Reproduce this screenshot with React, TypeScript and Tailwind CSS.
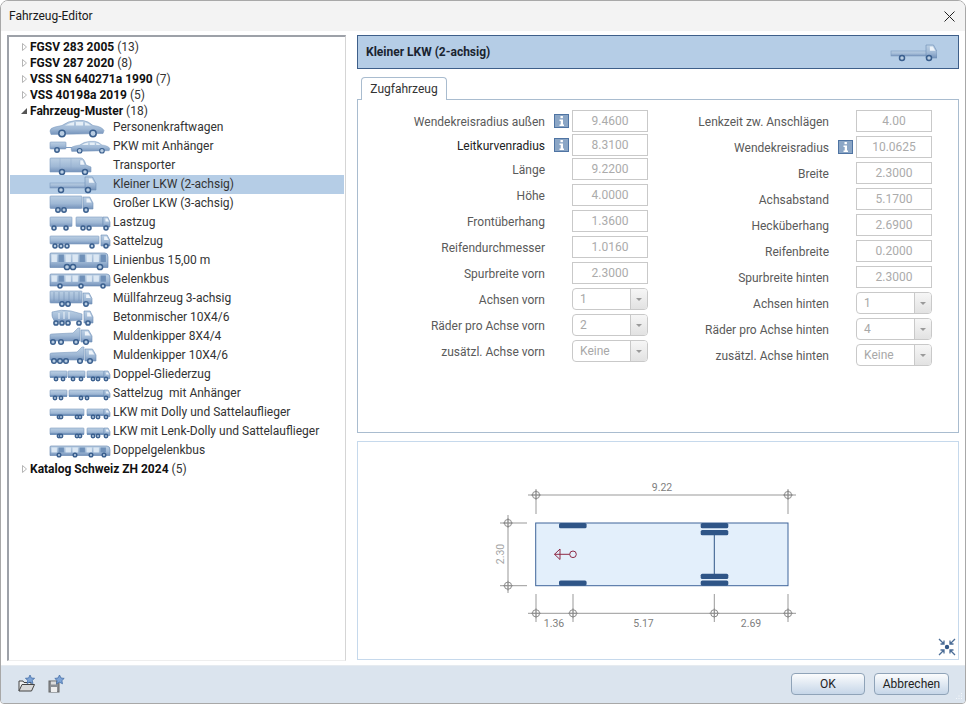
import React from "react";

const Wheel = ({ x, y, r = 2.5 }: { x: number; y: number; r?: number }) => (
  <circle cx={x} cy={y} r={r} fill="#b9cde2" stroke="#3a5f8e" strokeWidth={1.5} />
);
const Box = ({ x, y, w, h }: { x: number; y: number; w: number; h: number }) => (
  <rect x={x} y={y} width={w} height={h} rx={0.8} fill="url(#vg)" stroke="#7d9bc0" strokeWidth={0.6} />
);
const Cab = ({ x, y, w, h }: { x: number; y: number; w: number; h: number }) => (
  <g>
    <path d={`M${x} ${y + h}V${y}H${x + w * 0.68}L${x + w} ${y + h * 0.5}V${y + h}Z`} fill="url(#vg)" stroke="#6d8db5" strokeWidth={0.6} />
    <path d={`M${x + w * 0.35} ${y + 1.5}H${x + w * 0.62}L${x + w * 0.85} ${y + h * 0.45}H${x + w * 0.35}Z`} fill="#eef4fa" />
  </g>
);
const Car = ({ x, y, s = 1 }: { x: number; y: number; s?: number }) => (
  <g transform={`translate(${x} ${y}) scale(${s})`}>
    <path d="M0 11Q0 8 5 7L12 5.5Q18 1 26 .5H33Q38 1 43 5.5Q52 6.5 54 10.5L53 13.5L1 14.5Z" fill="url(#vg)" stroke="#7c9abf" strokeWidth={0.6} />
    <path d="M15 5.5Q20 2.5 24 2V5.5ZM26 2H33V5.5H26ZM35 2.3Q38 3 41 5.5H35Z" fill="#e6eff7" />
    <Wheel x={12} y={13.5} r={3.2} />
    <Wheel x={43} y={13.5} r={3.2} />
  </g>
);
const Bus = ({ x, y, w, h }: { x: number; y: number; w: number; h: number }) => {
  const n = Math.floor(w / 7);
  return (
    <g>
      <path d={`M${x} ${y + 1}Q${x} ${y} ${x + 1} ${y}H${x + w - 3}Q${x + w} ${y} ${x + w} ${y + 4}V${y + h}H${x}Z`} fill="url(#vg)" stroke="#5f82ad" strokeWidth={0.6} />
      {Array.from({ length: n }).map((_, i) => (
        <rect key={i} x={x + 1.5 + i * 7} y={y + 1.5} width={5.4} height={h * 0.52} fill={i % 3 === 1 ? "#6f90b8" : "#dbe7f3"} />
      ))}
    </g>
  );
};
const Tank = ({ x, y, w, h }: { x: number; y: number; w: number; h: number }) => (
  <g>
    <Box x={x} y={y} w={w} h={h} />
    {Array.from({ length: Math.floor(w / 5) }).map((_, i) => (
      <line key={i} x1={x + 4 + i * 5} x2={x + 4 + i * 5} y1={y + 1} y2={y + h - 2} stroke="#7290b5" strokeWidth={0.6} />
    ))}
  </g>
);
const Tub = ({ x, w }: { x: number; w: number }) => (
  <path d={`M${x} 8Q${x} 7 ${x + 2} 7L${x + w - 6} 6L${x + w - 1} 1L${x + w + 1} 1V14H${x}Z`} fill="url(#vg)" stroke="#7c9abf" strokeWidth={0.6} />
);
const Train = ({ parts }: { parts: [number, number, number[], boolean?][] }) => (
  <g>
    {parts.map(([a, b, ws, cab], i) => (
      <g key={i}>
        <Box x={a} y={6} w={b - a - (cab ? 6 : 0)} h={6.5} />
        <rect x={a} y={11} width={b - a - (cab ? 6 : 0)} height={2} fill="#7393ba" />
        {cab && <Cab x={b - 6} y={6} w={6} h={7.5} />}
        {ws.map((w) => (
          <Wheel key={w} x={w} y={14} r={1.7} />
        ))}
      </g>
    ))}
  </g>
);

const icons: React.ReactNode[] = [
  <Car x={49} y={2} />,
  <g>
    <Box x={49} y={5} w={16} h={7} />
    <rect x={65} y={10} width={6} height={1} fill="#7c9abf" />
    <Wheel x={56} y={13} r={2.2} />
    <Car x={70} y={4} s={0.72} />
  </g>,
  <g>
    <path d="M49 3Q49 2 50 2H80Q83 2 85 9L90 11V16H49Z" fill="url(#vg)" stroke="#7c9abf" strokeWidth={0.6} />
    <path d="M79 4H82L84 9H79ZM59 2.5V15M70 2.5V15" fill="#eef4fa" stroke="#8aa5c6" strokeWidth={0.4} />
    <Wheel x={61} y={16} />
    <Wheel x={84} y={16} />
  </g>,
  <g>
    <rect x={49} y={8} width={36} height={5} fill="url(#vg)" stroke="#7c9abf" strokeWidth={0.6} />
    <Cab x={84} y={2} w={11} h={13} />
    <Wheel x={60} y={15} />
    <Wheel x={87} y={15} />
  </g>,
  <g>
    <Box x={49} y={2} w={32} h={12.5} />
    <Cab x={82} y={3} w={10} h={12} />
    <Wheel x={57} y={16} r={2.2} />
    <Wheel x={63} y={16} r={2.2} />
    <Wheel x={85} y={16} r={2.2} />
  </g>,
  <g>
    <Box x={49} y={4} w={22} h={9.5} />
    <Box x={75} y={4} w={27} h={9.5} />
    <Cab x={102} y={4} w={7} h={10} />
    {[53, 65, 82, 88, 105].map((x) => (
      <Wheel key={x} x={x} y={15} r={2} />
    ))}
  </g>,
  <g>
    <Box x={49} y={4} w={49} h={8} />
    <Cab x={100} y={3} w={9} h={11} />
    {[54, 60, 66, 91, 105].map((x) => (
      <Wheel key={x} x={x} y={14} r={2} />
    ))}
  </g>,
  <g>
    <Bus x={49} y={2} w={58} h={14.5} />
    <Wheel x={66} y={16} r={2.6} />
    <Wheel x={72} y={16} r={2.6} />
    <Wheel x={99} y={16} r={2.6} />
  </g>,
  <g>
    <Bus x={49} y={4} w={60} h={12} />
    <Wheel x={59} y={16} r={2} />
    <Wheel x={80} y={16} r={2} />
    <Wheel x={102} y={16} r={2} />
  </g>,
  <g>
    <Tank x={49} y={2} w={32} h={12} />
    <Cab x={82} y={4} w={9} h={11} />
    <Wheel x={61} y={15} r={2.2} />
    <Wheel x={67} y={15} r={2.2} />
    <Wheel x={85} y={15} r={2.2} />
  </g>,
  <g>
    <path d="M51 4Q60 1 70 3L81 6V12L54 14Q50 9 51 4Z" fill="url(#vg)" stroke="#7c9abf" strokeWidth={0.6} />
    <path d="M58 5V11M63 4V11M68 4V11" stroke="#eef4fa" strokeWidth={1} />
    <Cab x={83} y={3} w={9} h={12} />
    {[55, 61, 67, 78, 87].map((x) => (
      <Wheel key={x} x={x} y={15} r={2.1} />
    ))}
  </g>,
  <g>
    <Tub x={49} w={29} />
    <Cab x={80} y={3} w={11} h={12} />
    {[52, 60, 75, 85].map((x) => (
      <Wheel key={x} x={x} y={15} r={2.3} />
    ))}
  </g>,
  <g>
    <Tub x={49} w={33} />
    <Cab x={84} y={3} w={11} h={12} />
    {[53, 59, 65, 79, 89].map((x) => (
      <Wheel key={x} x={x} y={15} r={2.3} />
    ))}
  </g>,
  <Train parts={[[49, 66, [55, 62]], [67, 84, [72, 80]], [86, 109, [92, 97, 105], true]]} />,
  <Train parts={[[49, 66, [54, 60]], [68, 109, [80, 86, 105], true]]} />,
  <Train parts={[[49, 83, [58, 60, 76, 79]], [86, 109, [92, 97, 105], true]]} />,
  <Train parts={[[49, 83, [58, 60, 76, 79]], [86, 109, [92, 97, 105], true]]} />,
  <g>
    <Bus x={49} y={5} w={60} h={9.5} />
    <Wheel x={58} y={14} r={1.8} />
    <Wheel x={74} y={14} r={1.8} />
    <Wheel x={90} y={14} r={1.8} />
    <Wheel x={103} y={14} r={1.8} />
  </g>,
];

const vehicles = [
  "Personenkraftwagen", "PKW mit Anhänger", "Transporter", "Kleiner LKW (2-achsig)", "Großer LKW (3-achsig)", "Lastzug", "Sattelzug", "Linienbus 15,00 m", "Gelenkbus", "Müllfahrzeug 3-achsig", "Betonmischer 10X4/6", "Muldenkipper 8X4/4", "Muldenkipper 10X4/6", "Doppel-Gliederzug", "Sattelzug  mit Anhänger", "LKW mit Dolly und Sattelauflieger", "LKW mit Lenk-Dolly und Sattelauflieger", "Doppelgelenkbus",
];

const Group = ({ name, count, open, m = "" }: { name: string; count: number; open?: boolean; m?: string }) => (
  <div className={`h-4 flex items-center pl-[11px] text-[12px] leading-4 whitespace-nowrap ${m}`}>
    <svg width="8" height="10" viewBox="0 0 8 10" className="shrink-0">
      {open ? <path d="M1 8H7V2Z" fill="#555" /> : <path d="M2.5 1.5L6.5 5L2.5 8.5Z" fill="#fff" stroke="#b5b5b5" />}
    </svg>
    <span className="font-bold text-[#111] ml-[2px]">{name}</span>
    <span className="text-[#333] ml-[3px]">({count})</span>
  </div>
);

const Info = () => (
  <svg width="15" height="14" viewBox="0 0 15 14" className="shrink-0">
    <rect x="0.5" y="0.5" width="14" height="13" fill="#8ba6c6" stroke="#4f74a3" />
    <rect x="6.5" y="2" width="2.4" height="2.2" fill="#fff" />
    <path d="M5.5 5.5H9V10.5H10V12H5.5V10.5H6.7V7H5.5Z" fill="#fff" />
  </svg>
);

type R = { l: string; v: string; info?: boolean; sel?: boolean; dark?: boolean; m: string };

const Row = ({ l, v, info, sel, dark, m, labelW }: R & { labelW: string }) => (
  <div className={`flex items-center h-[22px] ${m}`}>
    <div className={`${labelW} pr-[1px] pt-[1px] text-right text-[12px] whitespace-nowrap ${dark ? "text-[#222]" : "text-[#5a5a5a]"}`}>{l}</div>
    <div className="w-[26px] flex justify-start pl-[8px]">{info && <Info />}</div>
    {sel ? (
      <div className="w-[76px] h-[22px] border border-[#c9c9c9] rounded-[4px] flex overflow-hidden">
        <div className="flex-1 pl-[7px] text-[12px] leading-[20px] text-[#a8a8a8]">{v}</div>
        <div className="w-[17px] border-l border-[#c9c9c9] bg-gradient-to-b from-[#f6f6f6] to-[#e2e2e2] flex items-center justify-center">
          <div className="w-0 h-0 border-l-[3px] border-r-[3px] border-t-[3px] border-l-transparent border-r-transparent border-t-[#9a9a9a]" />
        </div>
      </div>
    ) : (
      <div className="w-[76px] h-[22px] border border-[#c9c9c9] text-center text-[12px] leading-[20px] text-[#ababab]">{v}</div>
    )}
  </div>
);

const left: R[] = [
  { l: "Wendekreisradius außen", v: "9.4600", info: true, m: "" },
  { l: "Leitkurvenradius", v: "8.3100", info: true, dark: true, m: "mt-[2px]" },
  { l: "Länge", v: "9.2200", m: "mt-[2px]" },
  { l: "Höhe", v: "4.0000", m: "mt-[4px]" },
  { l: "Frontüberhang", v: "1.3600", m: "mt-[4px]" },
  { l: "Reifendurchmesser", v: "1.0160", m: "mt-[4px]" },
  { l: "Spurbreite vorn", v: "2.3000", m: "mt-[4px]" },
  { l: "Achsen vorn", v: "1", sel: true, m: "mt-[4px]" },
  { l: "Räder pro Achse vorn", v: "2", sel: true, m: "mt-[4px]" },
  { l: "zusätzl. Achse vorn", v: "Keine", sel: true, m: "mt-[4px]" },
];
const right: R[] = [
  { l: "Lenkzeit zw. Anschlägen", v: "4.00", m: "" },
  { l: "Wendekreisradius", v: "10.0625", info: true, m: "mt-[4px]" },
  { l: "Breite", v: "2.3000", m: "mt-[4px]" },
  { l: "Achsabstand", v: "5.1700", m: "mt-[4px]" },
  { l: "Hecküberhang", v: "2.6900", m: "mt-[4px]" },
  { l: "Reifenbreite", v: "0.2000", m: "mt-[4px]" },
  { l: "Spurbreite hinten", v: "2.3000", m: "mt-[4px]" },
  { l: "Achsen hinten", v: "1", sel: true, m: "mt-[4px]" },
  { l: "Räder pro Achse hinten", v: "4", sel: true, m: "mt-[4px]" },
  { l: "zusätzl. Achse hinten", v: "Keine", sel: true, m: "mt-[4px]" },
];

const Cross = ({ x, y }: { x: number; y: number }) => (
  <g>
    <circle cx={x} cy={y} r={3.6} fill="none" stroke="#8a8a8a" strokeWidth={1} />
    <path d={`M${x - 5} ${y}H${x + 5}M${x} ${y - 5}V${y + 5}`} stroke="#8a8a8a" strokeWidth={0.8} />
  </g>
);

const Wh = ({ x, y }: { x: number; y: number }) => <rect x={x} y={y} width={27.6} height={5.3} rx={1.6} fill="#2f5587" />;

const Drawing = () => (
  <svg width="600" height="217" viewBox="358 442 600 217" className="block">
    <rect x={535.7} y={523} width={252.3} height={62.7} fill="#e3effb" stroke="#3f659a" strokeWidth={1} />
    <g stroke="#999" strokeWidth={1}>
      <path d="M528 495H796M536 489V514M788 489V514" />
      <path d="M500 523H527M500 585.7H527" />
      <path d="M528 613.3H796M536 594V622M573 594V622M714.3 594V622M788 594V622" />
    </g>
    <path d="M508 515V593" stroke="#b5b5b5" strokeWidth={1.4} />
    <Cross x={536} y={495} />
    <Cross x={788} y={495} />
    <Cross x={508} y={523} />
    <Cross x={508} y={585.7} />
    <Cross x={536} y={613.3} />
    <Cross x={573} y={613.3} />
    <Cross x={714.3} y={613.3} />
    <Cross x={788} y={613.3} />
    <Wh x={559} y={523} />
    <Wh x={559} y={580.4} />
    <Wh x={700.7} y={523} />
    <Wh x={700.7} y={530} />
    <Wh x={700.7} y={573.7} />
    <Wh x={700.7} y={580.4} />
    <path d="M714.3 535V574" stroke="#2f5587" strokeWidth={1} />
    <g fill="none" stroke="#8e2a45" strokeWidth={1}>
      <circle cx={573} cy={554.3} r={3.3} />
      <path d="M569.7 554.3H554.5M560 549L554.5 554.3L560 559.5Z" />
    </g>
    <g fill="#808080" fontSize={10.5} textAnchor="middle">
      <text x={662} y={491}>9.22</text>
      <text x={554} y={627}>1.36</text>
      <text x={643.5} y={627}>5.17</text>
      <text x={751} y={627}>2.69</text>
      <text x={0} y={0} fill="#a5a5a5" transform="translate(504 554) rotate(-90)">2.30</text>
    </g>
  </svg>
);

export default function App() {
  return (
    <div className="relative w-[966px] h-[704px] overflow-hidden bg-white font-[Roboto,sans-serif]">
      <svg width="0" height="0" className="absolute">
        <defs>
          <linearGradient id="vg" x1="0" y1="0" x2="0" y2="1">
            <stop offset="0" stopColor="#bcd0e4" />
            <stop offset="0.6" stopColor="#9fb8d5" />
            <stop offset="1" stopColor="#7593bb" />
          </linearGradient>
        </defs>
      </svg>
      <div className="absolute inset-0 border border-[#a8a8a8] rounded-t-[8px] rounded-b-[4px] overflow-hidden flex flex-col bg-white">
        <div className="h-[30px] shrink-0 bg-[#f3f3f3] flex items-center justify-between pl-[8px] pr-[10px] text-[12px] text-[#1a1a1a]">
          <span>Fahrzeug-Editor</span>
          <svg width="11" height="11" viewBox="0 0 11 11">
            <path d="M.5 .5L10.5 10.5M10.5 .5L.5 10.5" stroke="#222" strokeWidth="1" />
          </svg>
        </div>
        <div className="flex-1 relative">
          {/* tree */}
          <div className="absolute left-[6px] top-[4px] w-[339px] h-[626px] border-l-2 border-t-2 border-l-[#9da1a8] border-t-[#9da1a8] border-r border-r-[#d5d5d5] border-b border-b-[#eeeeee] pt-[2px]">
            <Group name="FGSV 283 2005" count={13} />
            <Group name="FGSV 287 2020" count={8} />
            <Group name="VSS SN 640271a 1990" count={7} />
            <Group name="VSS 40198a 2019" count={5} />
            <Group name="Fahrzeug-Muster" count={18} open m="-mb-[1px]" />
            {vehicles.map((v, i) => (
              <div key={v} className={`relative h-[19px] ml-[1px] mr-[1px] pb-[2px] flex items-center pl-[103px] text-[12px] text-[#333] whitespace-pre ${i === 3 ? "bg-[#b5cde6]" : ""}`}>
                <svg width="62" height="19" viewBox="48 0 62 19" className="absolute left-[39px] top-0 overflow-visible">
                  {icons[i]}
                </svg>
                {v}
              </div>
            ))}
            <Group name="Katalog Schweiz ZH 2024" count={5} m="mt-[1px]" />
          </div>
          {/* header */}
          <div className="absolute left-[356px] top-[4px] w-[602px] h-[34px] bg-[#b5cde6] border border-[#3e5f8a] flex items-center justify-between pl-[8px]">
            <span className="font-bold text-[12px] text-[#1a2430]">Kleiner LKW (2-achsig)</span>
            <svg width="48" height="20" viewBox="47 0 48 18" className="mr-[21px]">
              {icons[3]}
            </svg>
          </div>
          {/* tab */}
          <div className="absolute left-[356px] top-[68px] w-[602px] h-[334px] border border-[#a9bccf]">
            <div className="absolute left-[0px] top-[10px] flex">
              <div className="flex flex-col">
                {left.map((r) => (
                  <Row key={r.l} {...r} labelW="w-[188px]" />
                ))}
              </div>
              <div className="flex flex-col">
                {right.map((r) => (
                  <Row key={r.l} {...r} labelW="w-[182px]" />
                ))}
              </div>
            </div>
          </div>
          <div className="absolute left-[360px] top-[46px] w-[86px] h-[23px] bg-white border border-[#a9bccf] border-b-0 rounded-t-[4px] text-center text-[12px] leading-[22px] text-[#333]">
            Zugfahrzeug
          </div>
          {/* preview */}
          <div className="absolute left-[356px] top-[410px] w-[602px] h-[219px] border border-[#c6d9ec]">
            <Drawing />
            <svg width="18" height="18" viewBox="0 0 18 18" className="absolute left-[580px] top-[196px]">
              <circle cx="9" cy="9" r="2.2" fill="#2f5587" />
              <path d="M1 1L6 6M6 2.5V6H2.5M17 1L12 6M12 2.5V6H15.5M1 17L6 12M6 15.5V12H2.5M17 17L12 12M12 15.5V12H15.5" fill="none" stroke="#4a6c96" strokeWidth="1.3" />
            </svg>
          </div>
        </div>
        {/* footer */}
        <div className="h-[38px] shrink-0 bg-[#dbe4ee] border-t border-[#e6ebf0] relative">
          <svg width="18" height="18" viewBox="0 0 18 18" className="absolute left-[17px] top-[9px]">
            <path d="M1 16V6H5L6 7.5H13V10" fill="#f0f0f0" stroke="#444" />
            <path d="M1 16L4 9.5H16.5L13.5 16Z" fill="#d9d9d9" stroke="#444" />
            <path d="M12 0L13.4 3L16.6 3.3L14.2 5.4L15 8.6L12 7L9 8.6L9.8 5.4L7.4 3.3L10.6 3Z" fill="#7ea4d6" stroke="#3b66a0" strokeWidth="0.7" />
          </svg>
          <svg width="18" height="18" viewBox="0 0 18 18" className="absolute left-[47px] top-[9px]">
            <rect x="1" y="6" width="10" height="11" fill="#8b8f94" stroke="#666" />
            <rect x="3" y="12" width="6" height="5" fill="#eee" />
            <rect x="3" y="6.5" width="5" height="3" fill="#ddd" />
            <path d="M11.5 0L13 3L16.2 3.4L13.9 5.6L14.5 8.8L11.5 7.2L8.5 8.8L9.1 5.6L6.8 3.4L10 3Z" fill="#7ea4d6" stroke="#3b66a0" strokeWidth="0.7" />
          </svg>
          <button className="absolute left-[790px] top-[7px] w-[74px] h-[22px] rounded-[4px] border border-[#8fa3b8] bg-gradient-to-b from-[#fbfcfd] to-[#c6d6e8] text-[12px] text-[#222]">OK</button>
          <button className="absolute left-[873px] top-[7px] w-[75px] h-[22px] rounded-[4px] border border-[#8fa3b8] bg-gradient-to-b from-[#fbfcfd] to-[#c6d6e8] text-[12px] text-[#222]">Abbrechen</button>
          <svg width="9" height="9" viewBox="0 0 9 9" className="absolute right-[2px] bottom-[2px]">
            <path d="M7 1h1v1H7zM4.5 3.5h1v1h-1zM7 3.5h1v1H7zM2 6h1v1H2zM4.5 6h1v1h-1zM7 6h1v1H7z" fill="#f5f8fb" />
          </svg>
        </div>
      </div>
    </div>
  );
}
